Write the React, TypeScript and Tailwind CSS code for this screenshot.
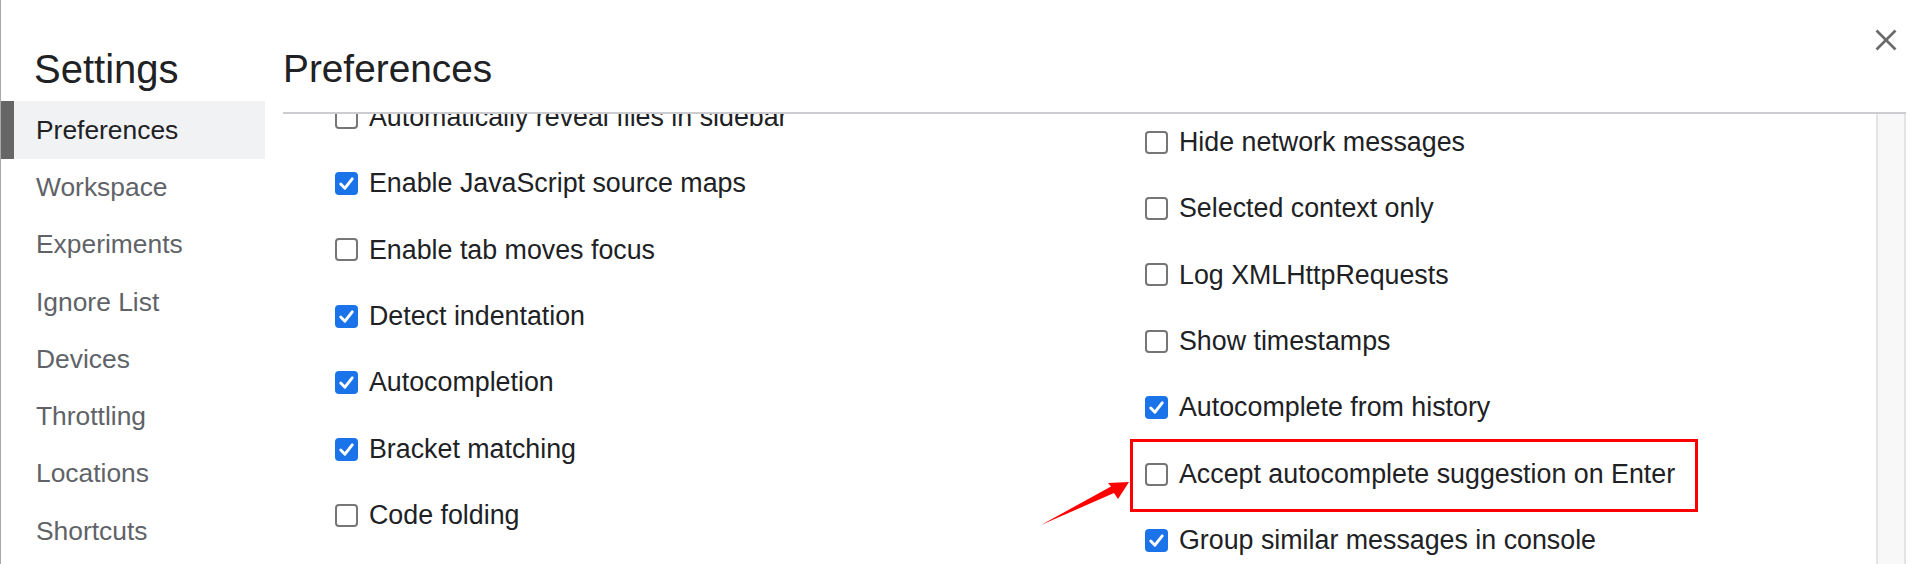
import React from "react";

const FONT = { fontFamily: '"Liberation Sans", Arial, Helvetica, sans-serif' };

function Box({ checked }: { checked: boolean }) {
  if (checked) {
    return (
      <div className="w-[23px] h-[23px] shrink-0 rounded-[4px] bg-[#1a73e8] flex items-center justify-center">
        <svg width="23" height="23" viewBox="0 0 22 22">
          <polyline points="5.5,11.5 9.5,15.5 16.5,6.5" fill="none" stroke="#ffffff" strokeWidth="2.8" strokeLinecap="round" strokeLinejoin="round" />
        </svg>
      </div>
    );
  }
  return <div className="w-[23px] h-[23px] shrink-0 rounded-[4px] border-2 border-[#767676] bg-white" />;
}

function Row({ label, checked }: { label: string; checked: boolean }) {
  return (
    <div className="h-[66.4px] flex items-center gap-[11px]">
      <Box checked={checked} />
      <span className="text-[26.8px] leading-none text-[#202124] whitespace-nowrap">{label}</span>
    </div>
  );
}

const left: [string, boolean][] = [
  ["Automatically reveal files in sidebar", false],
  ["Enable JavaScript source maps", true],
  ["Enable tab moves focus", false],
  ["Detect indentation", true],
  ["Autocompletion", true],
  ["Bracket matching", true],
  ["Code folding", false],
];

const right: [string, boolean][] = [
  ["Hide network messages", false],
  ["Selected context only", false],
  ["Log XMLHttpRequests", false],
  ["Show timestamps", false],
  ["Autocomplete from history", true],
  ["Accept autocomplete suggestion on Enter", false],
  ["Group similar messages in console", true],
];

const nav = ["Preferences", "Workspace", "Experiments", "Ignore List", "Devices", "Throttling", "Locations", "Shortcuts"];

export default function App() {
  return (
    <div className="relative w-[1920px] h-[564px] overflow-hidden bg-white flex border-l border-[#a9a9a9]" style={FONT}>
      {/* Sidebar */}
      <div className="w-[264px] shrink-0 flex flex-col">
        <div className="pl-[33px] pt-[47px] text-[40px] leading-[44px] text-[#202124]">Settings</div>
        <div className="mt-[10px] flex flex-col">
          {nav.map((n, i) =>
            i === 0 ? (
              <div key={n} className="h-[58px] leading-[58px] bg-[#f1f2f4] border-l-[13px] border-[#666666] pl-[22px] text-[26.4px] text-[#202124]">
                {n}
              </div>
            ) : (
              <div key={n} className="h-[57.3px] leading-[57.3px] pl-[35px] text-[26.4px] text-[#5f6368]">
                {n}
              </div>
            )
          )}
        </div>
      </div>

      {/* Main */}
      <div className="flex-1 flex flex-col min-w-0">
        <div className="h-[112px] flex shrink-0">
          <div className="ml-[18px] pt-[47px] text-[38.8px] leading-[44px] text-[#202124]">Preferences</div>
          <div className="ml-auto mr-[22px] mt-[28px]">
            <svg width="24" height="24" viewBox="0 0 24 24">
              <line x1="2.5" y1="2.5" x2="21.5" y2="21.5" stroke="#6b6b6b" strokeWidth="2.6" />
              <line x1="21.5" y1="2.5" x2="2.5" y2="21.5" stroke="#6b6b6b" strokeWidth="2.6" />
            </svg>
          </div>
        </div>
        <div className="ml-[18px] mr-[14px] h-[2px] bg-[#cdcdd1] shrink-0" />
        <div className="ml-[18px] mr-[14px] flex-1 flex overflow-hidden">
          <div className="flex-1 flex overflow-hidden">
            <div className="w-[862px] shrink-0 pl-[52px] mt-[-30px]">
              {left.map(([l, c]) => (
                <Row key={l} label={l} checked={c} />
              ))}
            </div>
            <div className="flex-1 mt-[-5px]">
              {right.map(([l, c]) => (
                <Row key={l} label={l} checked={c} />
              ))}
            </div>
          </div>
          <div className="w-[30px] shrink-0 bg-[#f8f8f8] border-l-2 border-r-2 border-[#e4e4e4]" />
        </div>
      </div>

      {/* Annotation: red box */}
      <div className="absolute left-[1129px] top-[439px] w-[568px] h-[73px] border-[3px] border-[#ff0000]" />
      {/* Annotation: red arrow */}
      <svg className="absolute left-[1030px] top-[475px]" width="110" height="60" viewBox="0 0 110 60">
        <polygon points="10,50 80,11.5 77,8 98,7 87,24 83,18" fill="#ff0000" />
      </svg>
    </div>
  );
}
